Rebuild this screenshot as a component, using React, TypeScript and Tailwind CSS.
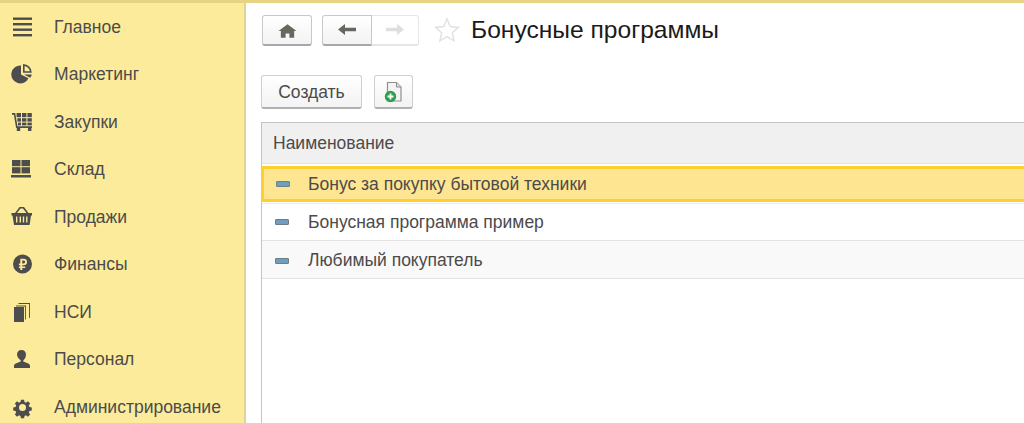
import { ReactNode } from "react";

const iconClass = "w-6 h-6 text-[#4d4d4d]";

function MenuIcon() {
  return (
    <svg viewBox="0 0 24 24" className={iconClass} fill="currentColor">
      <rect x="2" y="2.500" width="19" height="2.400" />
      <rect x="2" y="8" width="19" height="2.400" />
      <rect x="2" y="13.500" width="19" height="2.400" />
      <rect x="2" y="19" width="19" height="2.400" />
    </svg>
  );
}

function PieIcon() {
  return (
    <svg viewBox="0 0 24 24" className={iconClass} fill="currentColor">
      <path d="M10 3.500V12.500l7.500 3.700A9 9 0 1 1 10 3.500z" />
      <path d="M12 2a8.800 8.800 0 0 1 8.800 8.800H12V2zm1.600 1.900v5.300h5.300a7.200 7.200 0 0 0-5.300-5.300z" fillRule="evenodd" />
      <path d="M13 12.500h7.800a9 9 0 0 1-1.600 3.300z" />
    </svg>
  );
}

function CartIcon() {
  return (
    <svg viewBox="0 0 24 24" className={iconClass} fill="currentColor">
      <path d="M1 3h3.200l2.300 13.300H21v1.700H5.100L2.900 4.700H1z" />
      <rect x="5.600" y="3" width="4.400" height="4.200" />
      <rect x="11" y="3" width="4.400" height="4.200" />
      <rect x="16.400" y="3" width="4.400" height="4.200" />
      <rect x="6.400" y="8.200" width="3.600" height="3.400" />
      <rect x="11" y="8.200" width="4.400" height="3.400" />
      <rect x="16.400" y="8.200" width="4.400" height="3.400" />
      <rect x="7" y="12.600" width="3" height="2.800" />
      <rect x="11" y="12.600" width="4.400" height="2.800" />
      <rect x="16.400" y="12.600" width="4.400" height="2.800" />
      <rect x="5.800" y="18" width="3.400" height="3" />
      <rect x="17" y="18" width="3.400" height="3" />
    </svg>
  );
}

function WarehouseIcon() {
  return (
    <svg viewBox="0 0 24 24" className={iconClass} fill="currentColor">
      <rect x="1" y="3" width="8.500" height="6.200" />
      <rect x="10.500" y="3" width="8.500" height="6.200" />
      <rect x="1" y="10.200" width="8.500" height="6.200" />
      <rect x="10.500" y="10.200" width="8.500" height="6.200" />
      <rect x="0" y="18" width="20" height="2.500" />
    </svg>
  );
}

function BasketIcon() {
  return (
    <svg viewBox="0 0 24 24" className={iconClass} fill="currentColor">
      <path d="M0.500 8h20.500v2.400h-1L18.600 20H3L1.500 10.400h-1zM5 11.500v6h1.400v-6zm3.600 0v6h1.400v-6zm3.200 0v6h1.400v-6zm3.300 0v6h1.400v-6z" fillRule="evenodd" />
      <path d="M4 8l4.500-6h4.500L17.500 8h-2l-3.500-4.500H9.500L6 8z" />
    </svg>
  );
}

function RubleIcon() {
  return (
    <svg viewBox="0 0 24 24" className={iconClass} fill="currentColor">
      <path
        fillRule="evenodd"
        d="M11.500 2.500a9.500 9.500 0 1 1 0 19 9.500 9.500 0 0 1 0-19zM9.300 6.800v4.600H7.900v1.800h1.400v1.200H7.900v1.700h1.400v2h2v-2h3v-1.700h-3v-1.200h1.500a3.200 3.200 0 0 0 0-6.400zm2 1.800h1.400a1.400 1.400 0 0 1 0 2.800h-1.400z"
      />
    </svg>
  );
}

function PagesIcon() {
  return (
    <svg viewBox="0 0 24 24" className={iconClass} fill="currentColor">
      <rect x="3" y="7" width="10" height="15" />
      <path d="M5 5.500h10v14h-.9V6.400H5zM7.500 3h11.500v15h-.9V3.900H7.500z" />
    </svg>
  );
}

function PersonIcon() {
  return (
    <svg viewBox="0 0 24 24" className={iconClass} fill="currentColor">
      <path d="M10.500 3c2.800 0 4.500 1.800 4.500 4.500 0 2.500-1.200 4.800-2.700 5.700v1.400l5 1.800c1 .4 1.700 1.300 1.700 2.300V21H3v-2.300c0-1 .7-1.900 1.700-2.300l5-1.800v-1.400C8.200 12.300 6 10 6 7.500 6 4.800 7.700 3 10.500 3z" />
    </svg>
  );
}

function GearIcon() {
  return (
    <svg viewBox="0 0 24 24" className={iconClass} fill="currentColor">
      <path
        fillRule="evenodd"
        d="M10 2h4l.6 3 1.800.8 2.600-1.700 2.800 2.800-1.700 2.600.8 1.800 3 .6v4l-3 .6-.8 1.800 1.700 2.600-2.800 2.800-2.600-1.700-1.800.8-.6 3h-4l-.6-3-1.800-.8-2.600 1.700-2.800-2.800 1.700-2.600-.8-1.800-3-.6v-4l3-.6.8-1.800L2.200 6.900 5 4.100l2.600 1.700L9.400 5zM12 7.500a4.500 4.500 0 1 0 0 9 4.500 4.500 0 0 0 0-9z"
        transform="translate(2.140 3.140) scale(0.78)"
      />
    </svg>
  );
}

const menu: { label: string; icon: ReactNode }[] = [
  { label: "Главное", icon: <MenuIcon /> },
  { label: "Маркетинг", icon: <PieIcon /> },
  { label: "Закупки", icon: <CartIcon /> },
  { label: "Склад", icon: <WarehouseIcon /> },
  { label: "Продажи", icon: <BasketIcon /> },
  { label: "Финансы", icon: <RubleIcon /> },
  { label: "НСИ", icon: <PagesIcon /> },
  { label: "Персонал", icon: <PersonIcon /> },
  { label: "Администрирование", icon: <GearIcon /> },
];

function RowMark() {
  return (
    <span className="w-[14px] h-[6px] shrink-0 rounded-[1px] bg-[#6f9fc0] border border-[#6d7f86]" />
  );
}

export default function App() {
  return (
    <div className="w-[1024px] h-[423px] overflow-hidden bg-white flex flex-col font-['Liberation_Sans',Arial,sans-serif]">
      {/* TOP STRIPE */}
      <div className="h-[3px] shrink-0 bg-[#e6d483]" />

      <div className="flex flex-1 min-h-0">
        {/* SIDEBAR */}
        <nav className="w-[246px] shrink-0 bg-[#fbeb9b] border-r-2 border-[#dcd49a]">
          {menu.map((item) => (
            <div key={item.label} className="h-[47.5px] flex items-center pl-[11px]">
              {item.icon}
              <span className="ml-[19px] text-[17.5px] text-[#4b4b4b]">{item.label}</span>
            </div>
          ))}
        </nav>

        {/* CONTENT */}
        <main className="flex-1 min-w-0 pt-[11px]">
          {/* HEADER */}
          <div className="flex items-center h-[32px] pl-4">
            <button className="w-[50px] h-[31px] flex items-center justify-center bg-gradient-to-b from-white to-[#f3f3f3] border border-[#c8c8c8] border-b-2 border-b-[#a8a8a8] rounded-[3px]">
              <svg viewBox="0 0 20 14" className="w-[19px] h-[14px] mt-[2px] text-[#66675f]" fill="currentColor">
                <path d="M10 0l9.500 7H17v7h-5V9.500H8V14H3V7H.5z" />
              </svg>
            </button>
            <div className="flex ml-[10px]">
              <button className="w-[50px] h-[31px] flex items-center justify-center bg-gradient-to-b from-white to-[#f3f3f3] border border-[#c8c8c8] border-b-2 border-b-[#a8a8a8] rounded-l-[3px]">
                <svg viewBox="0 0 18 11" className="w-[18px] h-[11px] text-[#66675f]" fill="currentColor">
                  <path d="M0 5.500L7 0v3.700h11v3.600H7V11z" />
                </svg>
              </button>
              <button className="w-[47px] h-[31px] flex items-center justify-center bg-white border border-l-0 border-[#e6e6e6] border-b-2 rounded-r-[3px]">
                <svg viewBox="0 0 18 11" className="w-[18px] h-[11px] text-[#dedede]" fill="currentColor">
                  <path d="M18 5.500L11 0v3.700H0v3.600h11V11z" />
                </svg>
              </button>
            </div>
            <svg viewBox="0 0 26 26" className="w-[26px] h-[26px] ml-[15px] -mt-[1px]" fill="none" stroke="#e2e2e2" strokeWidth="1.500">
              <path d="M13 2l3.300 7.600 8 .8-6 5.400 1.800 8L13 19.700 5.900 23.800l1.800-8-6-5.400 8-.8z" />
            </svg>
            <h1 className="ml-[11px] text-[24.6px] font-normal text-[#1a1a1a] whitespace-nowrap">Бонусные программы</h1>
          </div>

          {/* ACTIONS */}
          <div className="flex mt-[29px] ml-[15px] gap-3">
            <button className="w-[101px] h-[34px] pt-[2px] bg-gradient-to-b from-white to-[#f3f3f3] border border-[#cfcfcf] border-b-2 border-b-[#b0b0b0] rounded-[3px] text-[17.5px] text-[#4b4b4b]">
              Создать
            </button>
            <button className="w-[39px] h-[34px] flex items-center justify-center bg-gradient-to-b from-white to-[#f3f3f3] border border-[#cfcfcf] border-b-2 border-b-[#b0b0b0] rounded-[3px]">
              <svg viewBox="0 0 20 22" className="w-5 h-[22px]">
                <path d="M3.500 1.500h9l4.500 4.500v14h-13.500z" fill="#f4f4f4" stroke="#8f8f8f" strokeWidth="1.200" />
                <path d="M12.500 1.500v4.500h4.500" fill="#dcdcdc" stroke="#8f8f8f" />
                <circle cx="6.500" cy="15.500" r="5.700" fill="#2f9e4f" />
                <path d="M3.500 15.500h6M6.500 12.500v6" stroke="#fff" strokeWidth="1.800" />
              </svg>
            </button>
          </div>

          {/* TABLE */}
          <div className="mt-[13px] ml-[15px] h-[400px] border-l border-t border-[#c4c4c4] text-[17.5px]">
            <div className="h-[41px] flex items-center pl-[11px] bg-[#f0f0f0] text-[#4b4b4b] border-b border-[#e3e3e3]">
              Наименование
            </div>
            <div className="mt-[2px] h-[36px] flex items-center pl-[12px] gap-[18px] bg-[#fee592] border-y-[3px] border-l-[3px] border-[#fdd02f] text-[#4b4b4b] -ml-px">
              <RowMark />
              <span>Бонус за покупку бытовой техники</span>
            </div>
            <div className="h-[38px] mt-[1px] flex items-center pl-[13px] gap-[19px] bg-white border-b border-t border-t-[#ececec] border-b-[#e3e3e3] text-[#4b4b4b]">
              <RowMark />
              <span>Бонусная программа пример</span>
            </div>
            <div className="h-[38px] pt-[2px] flex items-center pl-[13px] gap-[19px] bg-[#f9f9f9] border-b border-[#e3e3e3] text-[#4b4b4b]">
              <RowMark />
              <span>Любимый покупатель</span>
            </div>
          </div>
        </main>
      </div>
    </div>
  );
}
